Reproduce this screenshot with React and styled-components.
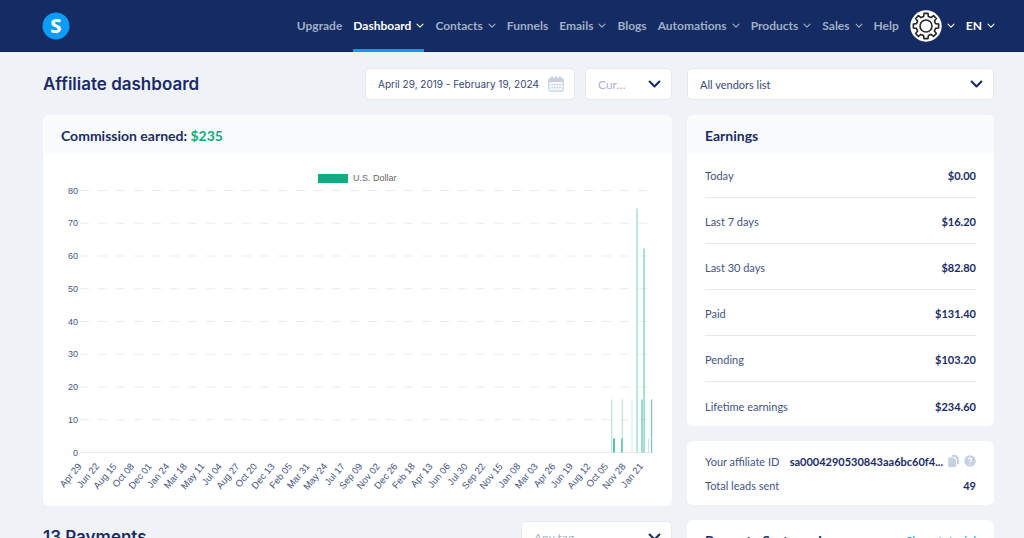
import React from 'react';
import styled, { createGlobalStyle } from 'styled-components';

const colors = {
  navy: '#142b63',
  heading: '#1b2b66',
  text: '#46547f',
  muted: '#a9b5c9',
  icon: '#c6d0e1',
  page: '#eff3f8',
  line: '#e6eaf0',
  blue: '#0b9cf8',
  green: '#12ac83',
};

const fonts = {
  body: "Lato, 'Open Sans', sans-serif",
  title: 'Inter, Roboto, sans-serif',
  chart: "'Liberation Sans', Arial, sans-serif",
};

const GlobalStyle = createGlobalStyle`
  *, *::before, *::after {
    box-sizing: border-box;
  }

  body {
    margin: 0;
    background: ${colors.page};
    color: ${colors.text};
    font-family: ${fonts.body};
    font-size: 12px;
  }

  h1, h2, ul, dl, dd {
    margin: 0;
    padding: 0;
  }
`;

const Page = styled.div`
  height: 100vh;
  overflow: hidden;
`;

const Header = styled.header`
  display: flex;
  justify-content: space-between;
  align-items: center;
  height: 52px;
  padding: 0 29px 0 42px;
  background: ${colors.navy};
  border-bottom: 1px solid #0d1f58;
`;

const LogoLink = styled.a`
  display: flex;
`;

const Nav = styled.nav`
  display: flex;
  align-items: center;
  gap: 11px;
  height: 52px;
`;

const NavLink = styled.a`
  display: flex;
  align-items: center;
  gap: 5px;
  height: 52px;
  color: ${({ $active }) => ($active ? '#fff' : '#a1aec6')};
  font-weight: 700;
  text-decoration: none;
  white-space: nowrap;
  box-shadow: ${({ $active }) => ($active ? `inset 0 -3px 0 ${colors.blue}` : 'none')};
`;

const LanguageButton = styled.button`
  display: flex;
  align-items: center;
  gap: 5px;
  padding: 0;
  border: 0;
  background: none;
  color: #fff;
  font-family: ${fonts.body};
  font-size: 12px;
  font-weight: 700;
`;

const Main = styled.main`
  display: grid;
  grid-template-columns: minmax(0, 1fr) 307px;
  gap: 15px;
  align-items: start;
  padding: 16px 30px 0 43px;
`;

const Stack = styled.div`
  display: flex;
  flex-direction: column;
  gap: 15px;
`;

const Toolbar = styled.div`
  display: flex;
  align-items: center;
  gap: 10px;
  height: 32px;
`;

const Title = styled.h1`
  flex: 1;
  color: ${colors.heading};
  font-family: ${fonts.title};
  font-size: 17px;
  font-weight: 600;
  line-height: 32px;
`;

const Field = styled.label`
  display: flex;
  align-items: center;
  position: relative;
  width: ${({ $width }) => $width || '100%'};
  height: 32px;
  background: #fff;
  border: 1px solid ${colors.line};
  border-radius: 5px;

  svg {
    position: absolute;
    right: 10px;
    pointer-events: none;
  }
`;

const DateInput = styled.input`
  width: 100%;
  height: 100%;
  padding: 0 30px 0 12px;
  border: 0;
  background: none;
  color: #3a4774;
  font-family: ${fonts.title};
  font-size: 10px;
`;

const Select = styled.select`
  width: 100%;
  height: 100%;
  padding: 1px 30px 0 12px;
  appearance: none;
  border: 0;
  background: none;
  color: ${({ $placeholder }) => ($placeholder ? colors.muted : '#3a4774')};
  font-family: ${fonts.body};
  font-size: ${({ $placeholder }) => ($placeholder ? '12px' : '11px')};
`;

const Card = styled.section`
  overflow: hidden;
  background: #fff;
  border-radius: 6px;
`;

const CardHeader = styled.div`
  display: flex;
  justify-content: space-between;
  align-items: center;
  height: 39px;
  padding: 2px 18px 0;
  background: ${({ $plain }) => ($plain ? '#fff' : '#f9fbfd')};
`;

const CardTitle = styled.h2`
  color: ${colors.heading};
  font-size: 14px;
  font-weight: 700;

  span {
    color: ${colors.green};
  }
`;

const CardLink = styled.a`
  color: ${colors.blue};
  text-decoration: none;
`;

const EarningsList = styled.dl`
  padding: 0 18px;
  margin-top: -2px;
  font-size: 11px;
`;

const EarningsRow = styled.div`
  display: flex;
  justify-content: space-between;
  align-items: center;
  height: 46px;
  padding-top: 2px;
  border-bottom: 1px solid ${colors.line};

  &:last-child {
    height: 44px;
    border-bottom: 0;
    padding-top: 4px;
  }
`;

const Value = styled.dd`
  color: ${colors.heading};
  font-weight: 700;
`;

const DetailList = styled.dl`
  padding: 8px 18px;
  font-size: 11px;
`;

const DetailRow = styled.div`
  display: flex;
  justify-content: space-between;
  align-items: center;
  height: 24px;
  white-space: nowrap;
`;

const ValueGroup = styled.div`
  display: flex;
  align-items: center;
  gap: 5px;
`;

const IconButton = styled.button`
  display: flex;
  padding: 0;
  border: 0;
  background: none;
  color: ${colors.icon};
`;

const ChartSvg = styled.svg`
  display: block;
  width: 100%;
  height: auto;
  font-family: ${fonts.chart};
`;

const Chevron = ({ size = 8, color = 'currentColor', weight = 1.1 }) => (
  <svg width={size} height={size} viewBox="0 0 8 8" fill="none" stroke={color} strokeWidth={weight} strokeLinecap="round" strokeLinejoin="round">
    <path d="M1 2.2l3 3 3-3" />
  </svg>
);

const Logo = () => (
  <svg width="28" height="28" viewBox="0 0 28 28">
    <circle cx="14" cy="14" r="13.5" fill={colors.blue} />
    <text x="14" y="21" textAnchor="middle" fill="#fff" fontFamily="'Noto Sans', sans-serif" fontSize="20" fontWeight="800">S</text>
  </svg>
);

// eight teeth, the first one pointing up
const gearPath = () => {
  const points = [];
  for (let i = 0; i < 8; i += 1) {
    const mid = i * 45 - 90;
    [[-14, 9.8], [-9, 12.8], [9, 12.8], [14, 9.8]].forEach(([offset, r]) => {
      const a = ((mid + offset) * Math.PI) / 180;
      points.push(`${(16 + r * Math.cos(a)).toFixed(2)} ${(16 + r * Math.sin(a)).toFixed(2)}`);
    });
  }
  return `M${points.join('L')}Z`;
};

const Avatar = () => (
  <svg width="32" height="32" viewBox="0 0 32 32">
    <circle cx="16" cy="16" r="15.7" fill="#fff" />
    <g fill="none" stroke="#26262a" strokeWidth="1.6" strokeLinejoin="round">
      <path d={gearPath()} />
      <circle cx="16" cy="16" r="6" />
    </g>
  </svg>
);

const CalendarIcon = () => (
  <svg width="16" height="16" viewBox="0 0 16 16">
    <rect x="0.8" y="2.3" width="14.4" height="12.9" rx="2" fill="#f4f7fb" stroke={colors.icon} strokeWidth="1.2" />
    <path d="M1 6V4a2 2 0 0 1 2-2h10a2 2 0 0 1 2 2v2z" fill={colors.icon} />
    <path d="M4 .8v2.4M8 .8v2.4M12 .8v2.4" stroke={colors.icon} strokeWidth="1.6" strokeLinecap="round" />
    <path d="M3.5 8.7h9.5M3.5 11.7h9.5" stroke={colors.icon} strokeWidth="1.3" strokeDasharray="1.6 1" />
  </svg>
);

const CopyIcon = () => (
  <svg width="11" height="12" viewBox="0 0 11 12" fill="currentColor">
    <path d="M4.5 0H8l2.8 2.6v5.9a1 1 0 0 1-1 1H9V4L6.3 1.7H3.5V1a1 1 0 0 1 1-1z" />
    <path d="M1.2 2.5h4.3L8.2 5v6a1 1 0 0 1-1 1h-6a1 1 0 0 1-1-1V3.5a1 1 0 0 1 1-1z" />
  </svg>
);

const HelpIcon = () => (
  <svg width="12" height="12" viewBox="0 0 12 12">
    <circle cx="6" cy="6" r="5.8" fill="currentColor" />
    <path d="M4.4 4.6a1.6 1.5 0 1 1 2.3 1.4Q6 6.3 6 7.2" fill="none" stroke="#fff" strokeWidth="1.2" />
    <circle cx="6" cy="9" r="0.7" fill="#fff" />
  </svg>
);

const navItems = [
  { label: 'Upgrade' },
  { label: 'Dashboard', menu: true, active: true },
  { label: 'Contacts', menu: true },
  { label: 'Funnels' },
  { label: 'Emails', menu: true },
  { label: 'Blogs' },
  { label: 'Automations', menu: true },
  { label: 'Products', menu: true },
  { label: 'Sales', menu: true },
  { label: 'Help' },
];

const earnings = [
  ['Today', '$0.00'],
  ['Last 7 days', '$16.20'],
  ['Last 30 days', '$82.80'],
  ['Paid', '$131.40'],
  ['Pending', '$103.20'],
  ['Lifetime earnings', '$234.60'],
];

const dates = [
  'Apr 29', 'Jun 22', 'Aug 15', 'Oct 08', 'Dec 01', 'Jan 24', 'Mar 18', 'May 11', 'Jul 04', 'Aug 27', 'Oct 20',
  'Dec 13', 'Feb 05', 'Mar 31', 'May 24', 'Jul 17', 'Sep 09', 'Nov 02', 'Dec 26', 'Feb 18', 'Apr 13', 'Jun 06',
  'Jul 30', 'Sep 22', 'Nov 15', 'Jan 08', 'Mar 03', 'Apr 26', 'Jun 19', 'Aug 12', 'Oct 05', 'Nov 28', 'Jan 21',
];

const bars = [
  { x: 568.3, value: 16.2, opacity: 0.35, width: 1 },
  { x: 570, value: 4.3, opacity: 0.7, width: 2 },
  { x: 578, value: 4.3, opacity: 0.6, width: 1.5 },
  { x: 578.8, value: 16.2, opacity: 0.35, width: 1 },
  { x: 588.5, value: 16.2, opacity: 0.2, width: 1 },
  { x: 593.2, value: 74.5, opacity: 0.35, width: 1.6 },
  { x: 598.2, value: 16.2, opacity: 0.5, width: 1.6 },
  { x: 600.2, value: 62.3, opacity: 0.4, width: 1.8 },
  { x: 605, value: 4.3, opacity: 0.25, width: 1 },
  { x: 608, value: 16.2, opacity: 0.6, width: 1.2 },
];

const zeroY = 298.5;
const toY = (value) => zeroY - value * 3.275;

const CommissionChart = () => (
  <ChartSvg viewBox="0 0 629 352" role="img" aria-label="Commission earned in U.S. dollars">
    <rect x="275" y="20" width="30" height="9" fill={colors.green} />
    <text x="310" y="27" fontSize="9" fill="#666">U.S. Dollar</text>
    {[80, 70, 60, 50, 40, 30, 20, 10, 0].map((tick) => (
      <g key={tick}>
        <text x="35" y={toY(tick) + 3} fontSize="9" textAnchor="end" fill={colors.text}>{tick}</text>
        <line
          x1="37"
          x2="610"
          y1={toY(tick)}
          y2={toY(tick)}
          stroke="#e9ecef"
          strokeDasharray={tick ? '9 9' : undefined}
        />
      </g>
    ))}
    {bars.map((bar) => (
      <rect
        key={bar.x}
        x={bar.x}
        y={toY(bar.value)}
        width={bar.width}
        height={zeroY - toY(bar.value)}
        fill={colors.green}
        opacity={bar.opacity}
      />
    ))}
    {dates.map((date, i) => (
      <text
        key={date}
        transform={`translate(${36 + i * 17.55} 310) rotate(-50)`}
        y="4"
        fontSize="9.5"
        textAnchor="end"
        fill={colors.text}
      >
        {date}
      </text>
    ))}
  </ChartSvg>
);

const SelectField = ({ label, value, width, placeholder }) => (
  <Field $width={width}>
    <Select aria-label={label} $placeholder={placeholder}>
      <option>{value}</option>
    </Select>
    <Chevron size={13} color={colors.heading} weight={1.3} />
  </Field>
);

const App = () => (
  <Page>
    <GlobalStyle />
    <Header>
      <LogoLink href="#" aria-label="Home"><Logo /></LogoLink>
      <Nav>
        {navItems.map((item) => (
          <NavLink href="#" key={item.label} $active={item.active}>
            {item.label}
            {item.menu && <Chevron />}
          </NavLink>
        ))}
        <NavLink href="#" aria-label="Account">
          <Avatar />
          <Chevron color="#fff" />
        </NavLink>
        <LanguageButton type="button">
          EN
          <Chevron />
        </LanguageButton>
      </Nav>
    </Header>

    <Main>
      <Stack>
        <Toolbar>
          <Title>Affiliate dashboard</Title>
          <Field $width="210px">
            <DateInput aria-label="Date range" defaultValue="April 29, 2019 - February 19, 2024" />
            <CalendarIcon />
          </Field>
          <SelectField label="Currency" value="Cur…" width="87px" placeholder />
        </Toolbar>

        <Card>
          <CardHeader>
            <CardTitle>Commission earned: <span>$235</span></CardTitle>
          </CardHeader>
          <CommissionChart />
        </Card>

        <Toolbar>
          <Title as="h2">13 Payments</Title>
          <SelectField label="Tag" value="Any tag" width="151px" placeholder />
        </Toolbar>
      </Stack>

      <Stack>
        <SelectField label="Vendor" value="All vendors list" />

        <Card>
          <CardHeader>
            <CardTitle>Earnings</CardTitle>
          </CardHeader>
          <EarningsList>
            {earnings.map(([label, amount]) => (
              <EarningsRow key={label}>
                <dt>{label}</dt>
                <Value>{amount}</Value>
              </EarningsRow>
            ))}
          </EarningsList>
        </Card>

        <Card>
          <DetailList>
            <DetailRow>
              <dt>Your affiliate ID</dt>
              <ValueGroup as="dd">
                <Value as="span">sa0004290530843aa6bc60f4...</Value>
                <IconButton type="button" aria-label="Copy affiliate ID"><CopyIcon /></IconButton>
                <IconButton type="button" aria-label="About affiliate ID"><HelpIcon /></IconButton>
              </ValueGroup>
            </DetailRow>
            <DetailRow>
              <dt>Total leads sent</dt>
              <Value>49</Value>
            </DetailRow>
          </DetailList>
        </Card>

        <Card>
          <CardHeader $plain>
            <CardTitle>Promote Systeme.io</CardTitle>
            <CardLink href="#">Show tutorial</CardLink>
          </CardHeader>
        </Card>
      </Stack>
    </Main>
  </Page>
);

export default App;
